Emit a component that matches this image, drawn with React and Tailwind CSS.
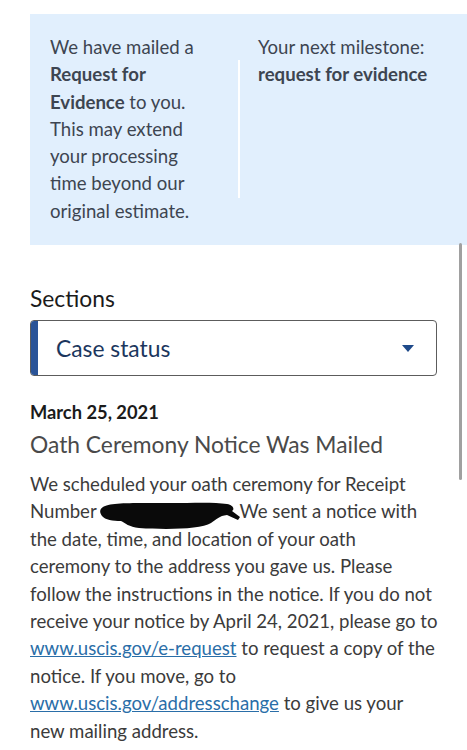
import React from 'react';

const font = { fontFamily: '"Lato", "Open Sans", sans-serif' };

const Redaction = () => (
  <svg width="142" height="30" viewBox="0 0 142 30" className="absolute left-[-2px] top-[-3px]">
    <path
      d="M4 6 C10 1 40 2 70 2 C95 2 115 1 128 3 C134 4 136 8 133 10 L141 16 L139 19 L128 14 C120 15 118 18 112 22 C102 28 70 29 40 27 C30 26 26 22 22 20 C14 20 6 19 3 15 C0 11 1 8 4 6 Z"
      fill="#0a0a0a"
    />
  </svg>
);

const App = () => {
  return (
    <div className="w-[467px] h-[750px] bg-white overflow-hidden relative" style={font}>
      {/* scrollbar thumb */}
      <div className="absolute left-[459px] top-[243px] w-[3px] h-[237px] bg-[#a0a0a0] rounded-full" />

      <div className="pt-[14px] pl-[30px]">
        <div className="h-[231px] bg-[#e1effd] flex text-[18.6px] leading-[27.3px] text-[#3d4551] whitespace-nowrap">
          <div className="w-[208px] pl-[20px] pt-[20px]">
            We have mailed a
            <br />
            <b className="font-bold">Request for</b>
            <br />
            <b className="font-bold">Evidence</b> to you.
            <br />
            This may extend
            <br />
            your processing
            <br />
            time beyond our
            <br />
            original estimate.
          </div>
          <div className="w-[2px] bg-white mt-[46px] h-[138px]" />
          <div className="pl-[18px] pt-[20px]">
            Your next milestone:
            <br />
            <b className="font-bold">request for evidence</b>
          </div>
        </div>
      </div>

      <div className="px-[30px]">
        <div className="mt-[39px] text-[22.8px] leading-[28px] text-[#1b1b1b]">Sections</div>

        <div className="mt-[8px] w-[407px] h-[56px] border border-[#5c5c5c] rounded-[4px] flex items-center relative overflow-hidden">
          <div className="absolute left-0 top-0 bottom-0 w-[7px] bg-[#2a5498]" />
          <span className="pl-[25px] text-[22.8px] text-[#1b365d]">Case status</span>
          <svg width="12" height="7" viewBox="0 0 12 7" className="ml-auto mr-[22px]">
            <path d="M0 0 H12 L6 7 Z" fill="#1f4a8a" />
          </svg>
        </div>

        <div className="mt-[25px] text-[18.3px] leading-[22px] font-bold text-[#1b1b1b]">March 25, 2021</div>
        <div className="mt-[7px] text-[22.8px] leading-[28px] text-[#4a4a4a]">Oath Ceremony Notice Was Mailed</div>

        <div className="mt-[13px] text-[18.6px] leading-[27.4px] text-[#3b3b3b] whitespace-nowrap">
          We scheduled your oath ceremony for Receipt
          <br />
          Number{' '}
          <span className="relative inline-block w-[134px] h-[20px] align-middle">
            <Redaction />
          </span>
          {' '}We sent a notice with
          <br />
          the date, time, and location of your oath
          <br />
          ceremony to the address you gave us. Please
          <br />
          follow the instructions in the notice. If you do not
          <br />
          receive your notice by April 24, 2021, please go to
          <br />
          <a href="#" className="text-[#2a6ea8] underline">www.uscis.gov/e-request</a> to request a copy of the
          <br />
          notice. If you move, go to
          <br />
          <a href="#" className="text-[#2a6ea8] underline">www.uscis.gov/addresschange</a> to give us your
          <br />
          new mailing address.
        </div>
      </div>
    </div>
  );
};

export default App;
